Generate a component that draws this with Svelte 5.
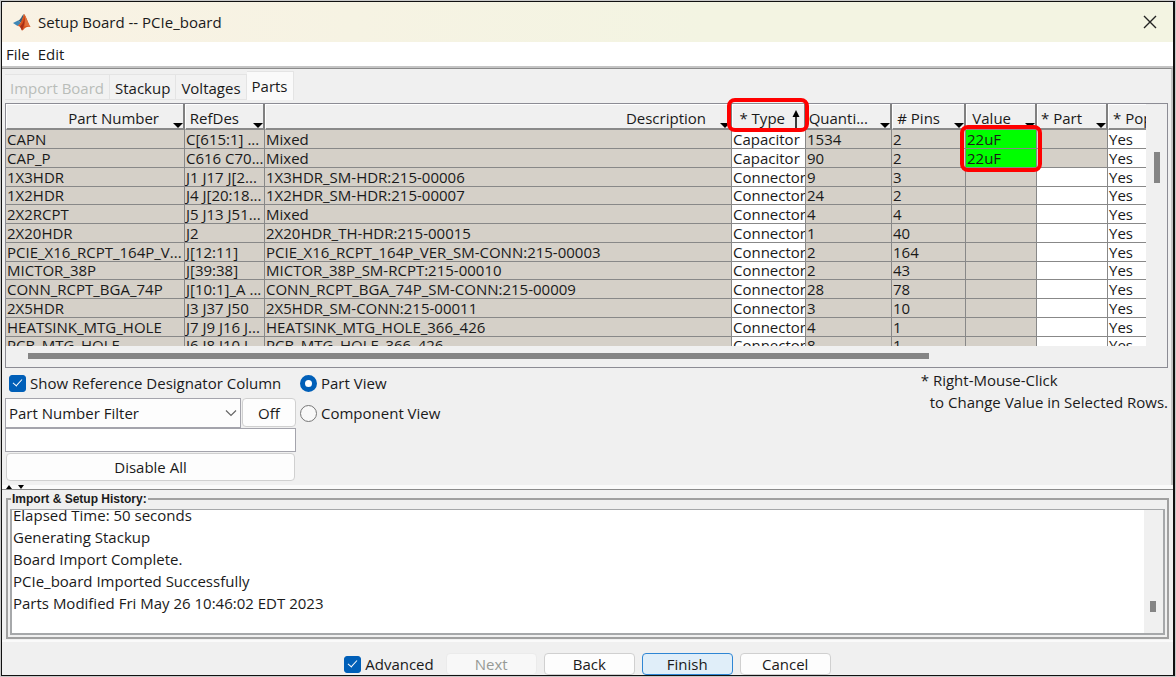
<script lang="ts">
  type Part = {
    name: string;
    refDes: string;
    description: string;
    type: string;
    quantity: string;
    pins: string;
    value: string;
  };

  const tabs = ['Import Board', 'Stackup', 'Voltages', 'Parts'];
  let activeTab = $state('Parts');

  const columns = [
    { key: 'name', label: 'Part Number' },
    { key: 'refdes', label: 'RefDes' },
    { key: 'description', label: 'Description' },
    { key: 'type', label: '* Type', sorted: true },
    { key: 'quantity', label: 'Quanti...' },
    { key: 'pins', label: '# Pins' },
    { key: 'value', label: 'Value' },
    { key: 'part', label: '* Part' },
    { key: 'populate', label: '* Populate' }
  ];

  function part(name: string, refDes: string, description: string, type: string, quantity: string, pins: string, value = ''): Part {
    return { name, refDes, description, type, quantity, pins, value };
  }

  const parts: Part[] = [
    part('CAPN', 'C[615:1] ...', 'Mixed', 'Capacitor', '1534', '2', '22uF'),
    part('CAP_P', 'C616 C70...', 'Mixed', 'Capacitor', '90', '2', '22uF'),
    part('1X3HDR', 'J1 J17 J[2...', '1X3HDR_SM-HDR:215-00006', 'Connector', '9', '3'),
    part('1X2HDR', 'J4 J[20:18...', '1X2HDR_SM-HDR:215-00007', 'Connector', '24', '2'),
    part('2X2RCPT', 'J5 J13 J51...', 'Mixed', 'Connector', '4', '4'),
    part('2X20HDR', 'J2', '2X20HDR_TH-HDR:215-00015', 'Connector', '1', '40'),
    part('PCIE_X16_RCPT_164P_V...', 'J[12:11]', 'PCIE_X16_RCPT_164P_VER_SM-CONN:215-00003', 'Connector', '2', '164'),
    part('MICTOR_38P', 'J[39:38]', 'MICTOR_38P_SM-RCPT:215-00010', 'Connector', '2', '43'),
    part('CONN_RCPT_BGA_74P', 'J[10:1]_A ...', 'CONN_RCPT_BGA_74P_SM-CONN:215-00009', 'Connector', '28', '78'),
    part('2X5HDR', 'J3 J37 J50', '2X5HDR_SM-CONN:215-00011', 'Connector', '3', '10'),
    part('HEATSINK_MTG_HOLE', 'J7 J9 J16 J...', 'HEATSINK_MTG_HOLE_366_426', 'Connector', '4', '1'),
    part('PCB_MTG_HOLE', 'J6 J8 J10 J...', 'PCB_MTG_HOLE_366_426', 'Connector', '8', '1')
  ];

  const history = [
    'Elapsed Time: 50 seconds',
    'Generating Stackup',
    'Board Import Complete.',
    'PCIe_board Imported Successfully',
    'Parts Modified Fri May 26 10:46:02 EDT 2023'
  ];

  let showRefDes = $state(true);
  let view = $state('part');
  let filterText = $state('');
  let advanced = $state(true);
</script>

<div class="window">
  <header class="titlebar">
    <svg class="logo" width="18" height="18" viewBox="0 0 18 18" aria-hidden="true">
      <path d="M0 10 5 7.500 8 10 4.500 13z" fill="#3f87b5" />
      <path d="M5 7.500C8 7 8.500 2.500 11 1L8.500 10z" fill="#35617f" />
      <path d="M11 1C9.500 5 8 11 4.500 13 7 12.500 8 15 9 17.500 11.500 16.500 12.500 12.500 17.500 14 15 10 13 3 11 1z" fill="#d9541e" />
      <path d="M11 1C11.500 5 11 10 7 13.500L9 17.500C11 13 12.500 8 11 1z" fill="#a82f17" />
      <path d="M11 1C12 5 12.500 9 11.500 13.500 13 12.500 15 13 17.500 14 15 10 13 3 11 1z" fill="#e0703a" />
    </svg>
    <h1>Setup Board -- PCIe_board</h1>
    <button class="close" aria-label="Close">
      <svg width="14" height="14" viewBox="0 0 14 14">
        <path d="M1 1 13 13M13 1 1 13" stroke="#222" stroke-width="1.4" fill="none" />
      </svg>
    </button>
  </header>

  <nav class="menu">
    <button>File</button>
    <button>Edit</button>
  </nav>

  <main>
    <div class="tabs" role="tablist">
      {#each tabs as tab}
        <button
          role="tab"
          class:active={tab === activeTab}
          aria-selected={tab === activeTab}
          disabled={tab === 'Import Board'}
          onclick={() => (activeTab = tab)}
        >{tab}</button>
      {/each}
    </div>

    <section class="parts">
      <div class="viewport">
        <table>
          <colgroup>
            {#each columns as column}
              <col class={column.key} />
            {/each}
          </colgroup>
          <thead>
            <tr>
              {#each columns as column}
                <th class={column.key} scope="col" aria-sort={column.sorted ? 'ascending' : undefined}>
                  <div class="head">
                    <span>{column.label}</span>
                    {#if column.sorted}
                      <svg width="8" height="18" viewBox="0 0 8 18">
                        <path d="M4 0 7.500 7H.5z" fill="#000" />
                        <path d="M4 5V18" stroke="#000" stroke-width="1.500" />
                      </svg>
                    {:else}
                      <svg width="10" height="5" viewBox="0 0 10 5">
                        <path d="M0 0H10L5 5z" fill="#000" />
                      </svg>
                    {/if}
                  </div>
                </th>
              {/each}
            </tr>
          </thead>
          <tbody>
            {#each parts as row}
              <tr>
                <td>{row.name}</td>
                <td>{row.refDes}</td>
                <td>{row.description}</td>
                <td class="editable">{row.type}</td>
                <td>{row.quantity}</td>
                <td>{row.pins}</td>
                <td class:set={row.value !== ''}>{row.value}</td>
                <td class:editable={row.value === ''}></td>
                <td class="editable">Yes</td>
              </tr>
            {/each}
          </tbody>
        </table>
      </div>
      <div class="scroll-y"><div class="thumb"></div></div>
      <div class="scroll-x"><div class="thumb"></div></div>
      <div class="mark mark-type"></div>
      <div class="mark mark-value"></div>
    </section>

    <section class="options">
      <div class="filters">
        <label class="show-ref">
          <input type="checkbox" bind:checked={showRefDes} />
          Show Reference Designator Column
        </label>
        <div class="filter-row">
          <div class="select">
            <select aria-label="Filter">
              <option>Part Number Filter</option>
              <option>Description Filter</option>
            </select>
            <svg width="12" height="8" viewBox="0 0 12 8">
              <path d="M1 1.500 6 6.500 11 1.500" stroke="#666" stroke-width="1.200" fill="none" />
            </svg>
          </div>
          <button class="btn">Off</button>
        </div>
        <input class="filter-text" type="text" aria-label="Filter text" bind:value={filterText} />
        <button class="btn disable-all">Disable All</button>
      </div>

      <div class="views">
        <label><input type="radio" name="view" value="part" bind:group={view} />Part View</label>
        <label><input type="radio" name="view" value="component" bind:group={view} />Component View</label>
      </div>

      <p class="hint">
        * Right-Mouse-Click
        <span>to Change Value in Selected Rows.</span>
      </p>
    </section>
  </main>

  <div class="splitter">
    <svg width="20" height="4" viewBox="0 0 20 4">
      <path d="M0 4 3 0 6 4zM12 0H18L15 4z" fill="#000" />
    </svg>
  </div>

  <fieldset>
    <legend>Import &amp; Setup History:</legend>
    <div class="history">
      <div class="log" role="log">
        {#each history as line}
          <p>{line}</p>
        {/each}
      </div>
      <div class="log-scroll"><div class="thumb"></div></div>
    </div>
  </fieldset>

  <footer>
    <label><input type="checkbox" bind:checked={advanced} />Advanced</label>
    <button class="btn" disabled>Next</button>
    <button class="btn">Back</button>
    <button class="btn primary">Finish</button>
    <button class="btn">Cancel</button>
  </footer>
</div>

<style>
  :global(body) {
    background: #c8c8c8;
  }

  .window {
    display: flex;
    flex-direction: column;
    box-sizing: border-box;
    height: calc(100vh - 2px);
    min-height: 560px;
    margin: 1px;
    border: 1px solid #111;
    border-right-width: 2px;
    background: #f0f0f0;
    color: #1a1a1a;
    font-family: "Open Sans", "Noto Sans", sans-serif;
    font-size: 15px;
    line-height: 20px;
    overflow: hidden;
  }

  button, input, select {
    margin: 0;
    font: inherit;
    color: inherit;
    box-sizing: border-box;
  }

  .titlebar {
    display: flex;
    align-items: center;
    flex: none;
    height: 40px;
    padding: 0 14px 0 11px;
    gap: 7px;
    border-radius: 8px 8px 0 0;
    background: linear-gradient(90deg, #f9f2e4, #f3f4e2 60%, #f3f4e2);
  }

  h1 {
    flex: 1;
    margin: 0;
    font-size: 15px;
    font-weight: 400;
  }

  .close {
    display: flex;
    padding: 2px;
    border: 0;
    background: none;
  }

  .menu {
    display: flex;
    flex: none;
    height: 24px;
    padding: 0 4px;
    gap: 8px;
    background: #fff;
    border-bottom: 2px solid #c4c4c4;
  }

  .menu button {
    padding: 0;
    border: 0;
    background: none;
  }

  main {
    display: flex;
    flex-direction: column;
    flex: 1;
    min-height: 0;
    padding: 2px 3px 0 3px;
    border-top: 1px solid #8a8a8a;
    border-right: 2px solid #c4c4c4;
  }

  .tabs {
    display: flex;
    align-items: flex-end;
    flex: none;
    height: 29px;
    padding-bottom: 3px;
  }

  .tabs button {
    height: 26px;
    padding: 1px 5px 0;
    border: 1px solid #e4e4e4;
    border-left: 0;
    background: #f2f2f2;
  }

  .tabs button:disabled {
    color: #b9bdb9;
  }

  .tabs button.active {
    height: 29px;
    padding-bottom: 2px;
    border-bottom: 0;
    background: #fafafa;
  }

  .parts {
    position: relative;
    display: grid;
    grid-template-columns: 1fr 21px;
    grid-template-rows: 1fr 21px;
    flex: 1;
    min-height: 0;
    border: 1px solid #8c8c94;
  }

  .viewport {
    overflow: hidden;
    min-height: 0;
  }

  table {
    width: calc(100% + 33px);
    table-layout: fixed;
    border-collapse: separate;
    border-spacing: 0;
  }

  col.name { width: 179px; }
  col.refdes { width: 80px; }
  col.type { width: 74px; }
  col.quantity { width: 86px; }
  col.pins { width: 74px; }
  col.value { width: 71px; }
  col.part { width: 71px; }
  col.populate { width: 71px; }

  th {
    padding: 0;
    font-weight: 400;
    border-bottom: 2px solid #8a8a8a;
    border-right: 2px solid #808080;
    border-left: 1px solid #fff;
    background: #f0f0f0;
  }

  .head {
    display: flex;
    align-items: flex-end;
    justify-content: flex-end;
    height: 23px;
    border-top: 1px solid #fff;
    white-space: nowrap;
  }

  .head span {
    margin-right: 14px;
  }

  .head svg {
    flex: none;
  }

  .type .head span {
    margin-right: 7px;
  }

  .type .head svg {
    margin-right: 4px;
  }

  .quantity .head span {
    margin-right: 12px;
  }

  .populate .head {
    justify-content: flex-start;
    padding-left: 4px;
  }

  td {
    height: 18px;
    padding: 0 0 0 1px;
    border-right: 1px solid #888;
    border-bottom: 1px solid #888;
    background: #d5d0c8;
    line-height: 18px;
    white-space: nowrap;
    overflow: hidden;
  }

  tr:nth-child(4n) td {
    height: 17px;
    line-height: 17px;
  }

  td.editable {
    background: #fff;
  }

  td.set {
    background: #0f0;
  }

  .thumb {
    background: #858585;
  }

  .scroll-y .thumb {
    width: 6px;
    height: 31px;
    margin: 48px 0 0 8px;
  }

  .scroll-x .thumb {
    width: 79%;
    height: 6px;
    margin: 7px 0 0 22px;
  }

  .mark {
    position: absolute;
    box-sizing: border-box;
    border: 4px solid #f00;
    border-radius: 8px;
    pointer-events: none;
  }

  .mark-type {
    top: -6px;
    right: 358px;
    width: 82px;
    height: 34px;
  }

  .mark-value {
    top: 21px;
    right: 125px;
    width: 82px;
    height: 47px;
  }

  .options {
    display: flex;
    flex: none;
    align-items: flex-start;
    padding-bottom: 4px;
  }

  label {
    display: flex;
    align-items: center;
    gap: 4px;
  }

  .filters {
    display: flex;
    flex-direction: column;
    width: 291px;
  }

  .show-ref {
    height: 30px;
    padding-left: 4px;
  }

  .filter-row {
    display: flex;
    gap: 1px;
  }

  .select {
    display: grid;
    flex: 1;
    align-items: center;
  }

  .select select,
  .select svg {
    grid-area: 1 / 1;
  }

  .select svg {
    justify-self: end;
    margin-right: 4px;
    pointer-events: none;
  }

  select {
    appearance: none;
    width: 100%;
    height: 30px;
    padding: 0 3px;
    border: 1px solid #a4a4ac;
    border-radius: 0;
    background: #fdfdfd;
  }

  .btn {
    padding: 0;
    border: 1px solid #d0d0d0;
    border-radius: 4px;
    background: #fdfdfd;
  }

  .btn:disabled {
    border-color: #ebebeb;
    background: #f8f8f8;
    color: #969a96;
  }

  .btn.primary {
    border-color: #2f86d4;
    background: #e0eef9;
  }

  .filter-row .btn {
    width: 54px;
    height: 29px;
  }

  .filter-text {
    height: 24px;
    border: 1px solid #a4a4ac;
    background: #fff;
  }

  .disable-all {
    height: 28px;
    margin: 1px 1px 0;
  }

  input[type='checkbox'],
  input[type='radio'] {
    appearance: none;
    display: grid;
    place-content: center;
    flex: none;
    width: 17px;
    height: 17px;
    border: 1px solid #777;
    background: #f8f8f8;
  }

  input[type='checkbox'] {
    border-radius: 3px;
  }

  input[type='checkbox']:checked {
    border-color: #005fb8;
    background: #005fb8;
  }

  input[type='checkbox']:checked::after {
    content: '';
    width: 4px;
    height: 8px;
    margin-bottom: 3px;
    border: solid #fff;
    border-width: 0 1px 1px 0;
    transform: rotate(42deg);
  }

  input[type='radio'] {
    border-radius: 50%;
  }

  input[type='radio']:checked {
    border: 5px solid #005fb8;
    background: #fff;
  }

  .views label {
    height: 30px;
    margin-left: 4px;
  }

  .hint {
    margin: 1px 0 0 auto;
    line-height: 22px;
  }

  .hint span {
    display: block;
    padding-left: 9px;
  }

  .splitter {
    flex: none;
    display: flex;
    height: 4px;
    padding-left: 4px;
    border-bottom: 1px solid #8a8a8a;
    background: #fafafa;
  }

  fieldset {
    flex: none;
    min-width: 0;
    margin: 2px 4px 0 4px;
    padding: 3px 2px 2px 2px;
    border: 2px solid #a0a0a0;
  }

  legend {
    margin-left: 1px;
    padding: 0 1px;
    font: bold 12px/14px "Liberation Sans", Arial, sans-serif;
  }

  .history {
    display: flex;
    height: 123px;
    border: 2px solid #a6a8aa;
    border-top-width: 1px;
    background: #fff;
  }

  /* pinned to the newest entry, older ones scroll out at the top */
  .log {
    display: flex;
    flex-direction: column;
    justify-content: flex-end;
    flex: 1;
    overflow: hidden;
    padding: 0 0 19px 1px;
  }

  .log p {
    flex: none;
    height: 22px;
    margin: 0;
    line-height: 22px;
  }

  .log-scroll {
    display: flex;
    align-items: flex-end;
    width: 19px;
    background: #f0f0f0;
  }

  .log-scroll .thumb {
    width: 6px;
    height: 11px;
    margin: 0 0 21px 6px;
  }

  footer {
    display: flex;
    flex: none;
    justify-content: center;
    gap: 7px;
    margin-top: 1px;
    padding-top: 11px;
    border-top: 2px solid #fafafa;
  }

  footer label {
    margin-right: 5px;
  }

  footer .btn {
    width: 91px;
    height: 22px;
    line-height: 18px;
  }
</style>
